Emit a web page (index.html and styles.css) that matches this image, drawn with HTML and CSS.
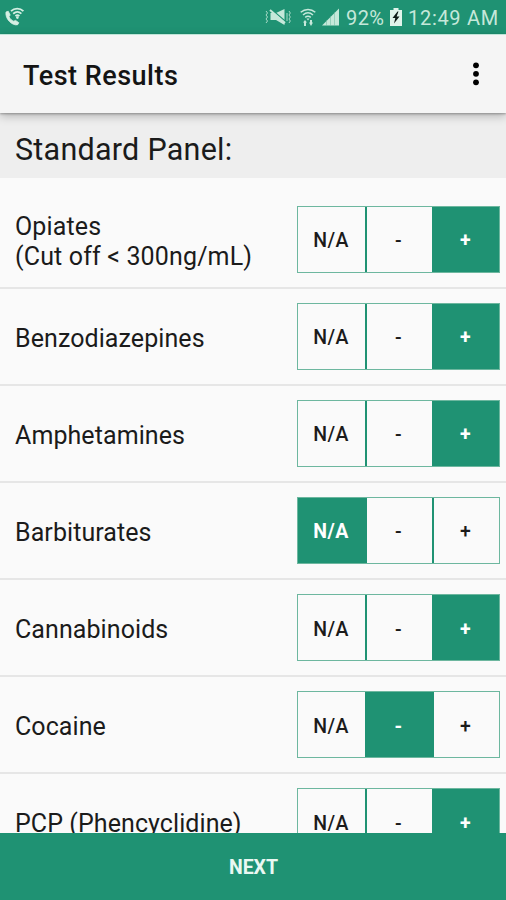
FILE: index.html
```html
<!DOCTYPE html>
<html lang="en">
<head>
<meta charset="utf-8">
<title>Test Results</title>
<link rel="stylesheet" href="styles.css">
</head>
<body>
<div class="screen">
  <div class="statusbar">
    <svg class="call" width="22" height="22" viewBox="0 0 22 22" fill="none" stroke="#d5efe3">
      <path d="M2 6 4.2 5.2 6.2 9 5 10.7C6 12.9 7.6 14.3 9.7 15.2L11.6 14.4 14.8 16.7 13.7 18.7C8 20.2.8 12.4 2 6z" fill="#d5efe3" stroke="#d5efe3" stroke-width=".8"/>
      <path d="M7 5.2C10.5 1.8 16 1.8 19.4 5.2M9.2 7.7C11.7 5.5 15 5.5 17.4 7.7M11.4 10C12.7 9 14.2 9 15.4 10" stroke-width="1.8"/>
      <circle cx="13.4" cy="11.6" r="1.3" fill="#d5efe3" stroke="none"/>
    </svg>
    <svg class="mute" width="26" height="18" viewBox="0 0 26 18" fill="#c5e8da">
      <path d="M5.5 5H11L19.5 1V17L11 12H5.5z"/>
      <path d="M6.5 1.5 20.5 13.5" stroke="#1f9273" stroke-width="1.6"/>
      <path d="M5 2 20 15" stroke="#c5e8da" stroke-width="2"/>
      <path d="M1 3 2.5 5 1 7 2.5 9 1 11 2.5 13 1 15M22 5V13M24 3 25.3 5 24 7 25.3 9 24 11 25.3 13 24 15" fill="none" stroke="#a9dbc8"/>
    </svg>
    <svg class="wifi" width="16" height="19" viewBox="0 0 16 19" fill="none" stroke="#c5e8da" stroke-width="1.5">
      <path d="M.7 4.3C5 .4 11 .4 15.3 4.3M3 7C6 4.4 10 4.4 13 7M5.2 9.4C7 8 9 8 10.8 9.4"/>
      <path d="M6.5 10.5H9.5L8 12.5z" fill="#c5e8da" stroke="none"/>
      <path d="M3 14.5 5 12 7 14.5H6V18H4V14.5zM9 14.5H10V12H12V14.5H13L11 18z" fill="#c5e8da" stroke="none"/>
    </svg>
    <svg class="signal" width="18" height="18" viewBox="0 0 18 18">
      <path d="M0 17.5 17 .5V17.5z" fill="#c5e8da"/>
      <path d="M4.5 12V18M8.5 8V18M12.5 4V18" stroke="#69b99f" stroke-width=".5"/>
    </svg>
    <span class="percent">92%</span>
    <svg class="battery" width="12" height="18" viewBox="0 0 12 18">
      <path d="M3.5 0H8.5V2H12V18H0V2H3.5z" fill="#e0f4eb"/>
      <path d="M7.5 3.5 2.5 10H5.3L4 15.5 9.5 8.5H6.6L8.5 3.5z" fill="#0d1b16"/>
    </svg>
    <span class="clock">12:49 AM</span>
  </div>
  <header class="appbar">
    <h1>Test Results</h1>
    <svg width="8" height="26" viewBox="0 0 8 26"><circle cx="4" cy="3.3" r="2.9"/><circle cx="4" cy="11.8" r="2.9"/><circle cx="4" cy="20.3" r="2.9"/></svg>
  </header>
  <main class="content">
    <h2>Standard Panel:</h2>
    <ul class="tests">
      <li><span class="name cutoff">Opiates<br>(Cut off &lt; 300ng/mL)</span><div class="choice"><b>N/A</b><b>-</b><b class="on">+</b></div></li>
      <li><span class="name">Benzodiazepines</span><div class="choice"><b>N/A</b><b>-</b><b class="on">+</b></div></li>
      <li><span class="name">Amphetamines</span><div class="choice"><b>N/A</b><b>-</b><b class="on">+</b></div></li>
      <li><span class="name">Barbiturates</span><div class="choice"><b class="on">N/A</b><b>-</b><b>+</b></div></li>
      <li><span class="name">Cannabinoids</span><div class="choice"><b>N/A</b><b>-</b><b class="on">+</b></div></li>
      <li><span class="name">Cocaine</span><div class="choice"><b>N/A</b><b class="on">-</b><b>+</b></div></li>
      <li><span class="name">PCP (Phencyclidine)</span><div class="choice"><b>N/A</b><b>-</b><b class="on">+</b></div></li>
    </ul>
  </main>
  <footer class="next">NEXT</footer>
</div>
</body>
</html>
```
FILE: styles.css
```css
* { box-sizing: border-box; }
body { margin: 0; font-family: Roboto, "Liberation Sans", sans-serif; color: #1b1b1b; }
.screen { width: 506px; height: 900px; display: flex; flex-direction: column; overflow: hidden; background: #fafafa; }
.statusbar { flex: none; height: 34px; display: flex; align-items: center; padding: 0 8px 0 4px; background: #1f9273; color: #c5e8da; font-size: 20px; line-height: 34px; white-space: nowrap; }
.statusbar svg { flex: none; }
.call { margin-right: auto; }
.wifi { margin-left: 9px; }
.signal { margin-left: 6px; }
.percent { width: 39px; margin-left: 6px; padding-top: 2px; letter-spacing: .4px; }
.battery { margin-left: 5px; }
.clock { width: 90px; margin-left: 6px; padding-top: 2px; letter-spacing: .7px; }
.appbar { flex: none; height: 79px; display: flex; align-items: center; justify-content: space-between; padding: 2px 26px 0 23px; background: #f5f5f5; border-top: 1px solid #bfe5d8; box-shadow: 0 1px 2px rgba(0,0,0,.28), 0 3px 9px rgba(0,0,0,.25); z-index: 1; }
h1 { margin: 0; padding-top: 1px; font-size: 27px; font-weight: 500; letter-spacing: .5px; color: #141414; }
.content { flex: 1; min-height: 0; overflow: hidden; }
h2 { height: 65px; margin: 0; padding: 8px 15px 0; background: #eee; font-size: 30.5px; font-weight: 400; line-height: 58px; letter-spacing: .25px; }
.tests { margin: 0; padding: 13.6px 0 0; list-style: none; }
.tests li { height: 97.1px; display: flex; align-items: center; justify-content: space-between; padding: 0 6px 0 15px; border-bottom: 2px solid #e6e6e6; }
.name { padding-top: 5px; font-size: 25px; line-height: 30px; letter-spacing: .08px; white-space: nowrap; }
.cutoff { letter-spacing: .15px; }
.choice { width: 203px; height: 67px; display: grid; grid-template-columns: 67px 67px 67px; border: 1px solid #6db79f; }
.choice b { display: flex; align-items: center; justify-content: center; font-size: 19.5px; font-weight: 500; letter-spacing: .4px; padding-top: 3px; }
.choice b:first-child { padding-right: 1px; }
.choice b + b { padding-right: 2px; border-left: 2px solid #1f9273; }
.choice .on { background: #1f9273; color: #fff; font-weight: 700; }
.next { flex: none; height: 67px; padding-left: 1px; background: #1f9273; color: #e9f8f2; text-align: center; font-size: 19.5px; font-weight: 700; line-height: 70px; }
```
